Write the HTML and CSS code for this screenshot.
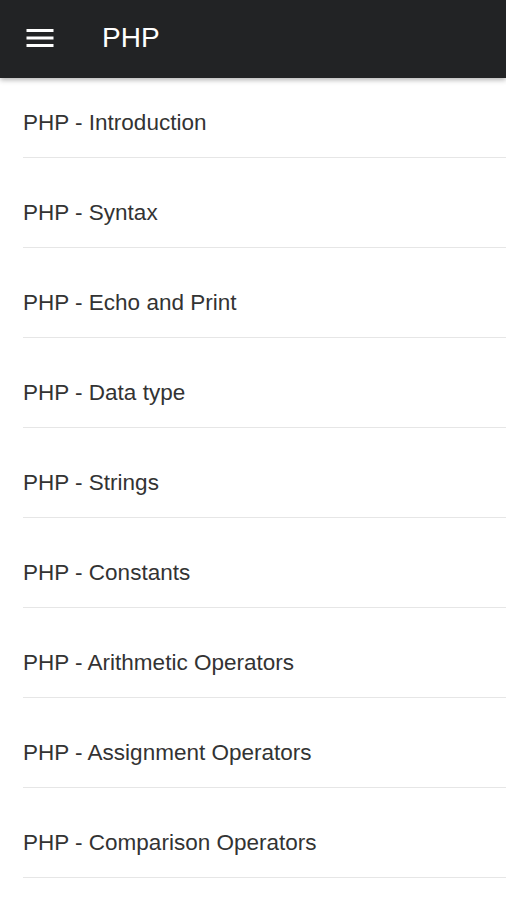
FILE: index.html
```html
<!DOCTYPE html>
<html>
<head>
<meta charset="utf-8">
<link rel="stylesheet" href="styles.css">
</head>
<body>
<header class="appbar">
  <svg class="menu-icon" viewBox="0 0 24 24" width="36" height="36"><path fill="#fff" d="M3 18h18v-2H3v2zm0-5h18v-2H3v2zm0-7v2h18V6H3z"/></svg>
  <h1 class="title">PHP</h1>
</header>
<ul class="topics">
  <li class="topic">PHP - Introduction</li>
  <li class="topic">PHP - Syntax</li>
  <li class="topic">PHP - Echo and Print</li>
  <li class="topic">PHP - Data type</li>
  <li class="topic">PHP - Strings</li>
  <li class="topic">PHP - Constants</li>
  <li class="topic">PHP - Arithmetic Operators</li>
  <li class="topic">PHP - Assignment Operators</li>
  <li class="topic">PHP - Comparison Operators</li>
</ul>
</body>
</html>
```
FILE: styles.css
```css
html, body {
  margin: 0;
  padding: 0;
  background: #fff;
  height: 900px;
  overflow: hidden;
  font-family: "Liberation Sans", Arial, sans-serif;
}
.appbar {
  height: 78px;
  background: #222325;
  display: flex;
  align-items: center;
  padding-left: 22px;
  box-shadow: 0 2px 5px rgba(0,0,0,0.3);
  position: relative;
  z-index: 1;
}
.menu-icon {
  display: block;
  margin-top: -2px;
}
.title {
  margin: -3px 0 0 44px;
  color: #fff;
  font-size: 28px;
  font-weight: 400;
  line-height: 32px;
}
.topics {
  list-style: none;
  margin: 0;
  padding: 0 0 0 23px;
}
.topic {
  font-size: 22.5px;
  line-height: 24px;
  color: #333;
  padding: 43px 0 22px 0;
  border-bottom: 1px solid #e6e6e6;
}
.topic:first-child {
  padding-top: 33px;
}
```
